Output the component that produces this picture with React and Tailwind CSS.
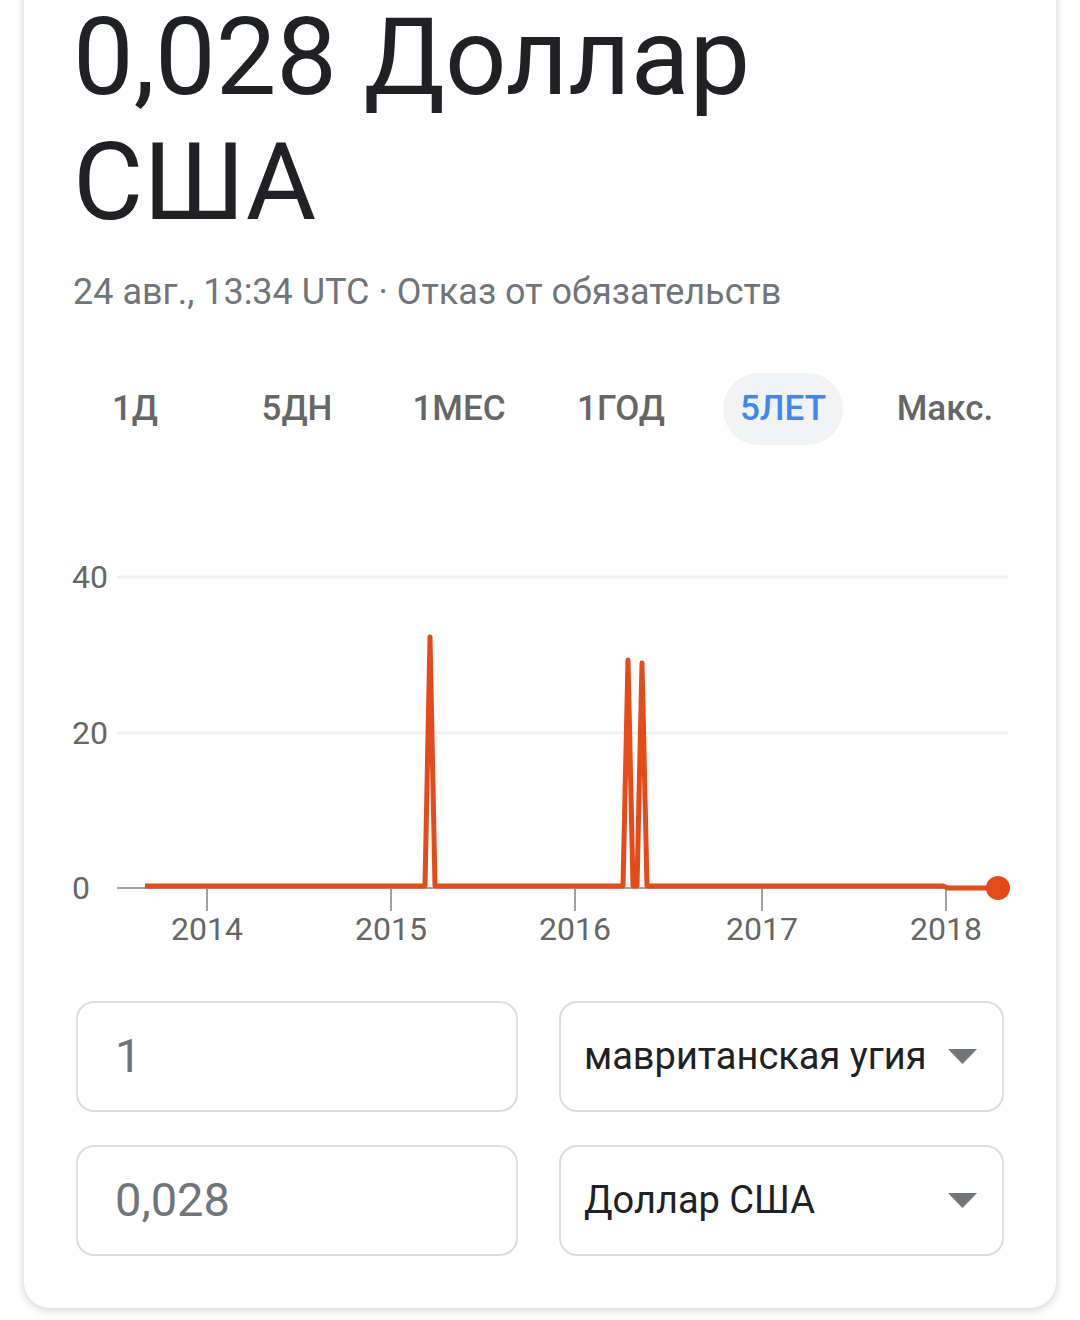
import React from "react";

const tabs = ["1Д", "5ДН", "1МЕС", "1ГОД", "5ЛЕТ", "Макс."];

function Chart() {
  const pts = [
    [145, 886], [425, 886], [430, 637], [435, 886], [623, 886], [628, 660], [633, 886],
    [637, 886], [642, 663], [647, 886], [943, 886], [948, 888], [998, 888],
  ];
  const ticks = [
    [207, "2014"], [391, "2015"], [575, "2016"], [762, "2017"], [946, "2018"],
  ];
  return (
    <svg
      className="block w-[1032px] h-[400px] -mx-[52px]"
      viewBox="24 550 1032 400"
      width="1032"
      height="400"
      style={{ fontFamily: "Roboto, sans-serif" }}
    >
      <line x1="117" y1="577" x2="1008" y2="577" stroke="#f1f1f1" strokeWidth="3" />
      <line x1="117" y1="733" x2="1008" y2="733" stroke="#f1f1f1" strokeWidth="3" />
      <line x1="117" y1="888" x2="1008" y2="888" stroke="#a0a0a0" strokeWidth="2" />
      {ticks.map(([x]) => (
        <line key={x} x1={x} y1="888" x2={x} y2="911" stroke="#a0a0a0" strokeWidth="2" />
      ))}
      <text x="108" y="588" textAnchor="end" fontSize="32" fill="#666666">40</text>
      <text x="108" y="744" textAnchor="end" fontSize="32" fill="#666666">20</text>
      <text x="90" y="899" textAnchor="end" fontSize="32" fill="#666666">0</text>
      {ticks.map(([x, t]) => (
        <text key={t} x={x} y="940" textAnchor="middle" fontSize="32" fill="#666666">{t}</text>
      ))}
      <polyline
        points={pts.map((p) => p.join(",")).join(" ")}
        fill="none"
        stroke="#e64a19"
        strokeWidth="5"
        strokeLinejoin="round"
      />
      <circle cx="998" cy="888" r="12" fill="#e64a19" />
    </svg>
  );
}

function Caret() {
  return (
    <svg width="29" height="15" viewBox="0 0 29 15" className="shrink-0">
      <path d="M0 0 H29 L14.5 15 Z" fill="#70757a" />
    </svg>
  );
}

export default function App() {
  return (
    <div className="w-[1080px] h-[1320px] overflow-hidden bg-white px-[24px] font-['Roboto',sans-serif]">
      <div className="-mt-[30px] pt-[25px] px-[52px] pb-[52px] bg-white rounded-[26px] shadow-[0_2px_8px_rgba(32,33,36,0.22)]">
        <h1 className="-ml-[3px] text-[108px] leading-[125px] text-[#202124] font-normal whitespace-nowrap">
          0,028 Доллар
          <br />
          США
        </h1>
        <div className="-ml-[3px] mt-[27px] text-[36px] leading-[40px] text-[#70757a] whitespace-nowrap">
          24 авг., 13:34 UTC · Отказ от обязательств
        </div>
        <div className="mt-[61px] -mx-[22px] grid grid-cols-6">
          {tabs.map((t) => (
            <div key={t} className="flex justify-center">
              <div
                className={
                  t === "5ЛЕТ"
                    ? "h-[72px] w-[120px] rounded-full bg-[#f1f3f4] flex items-center justify-center text-[35px] font-medium text-[#4285f4]"
                    : "h-[72px] w-[120px] rounded-full flex items-center justify-center text-[35px] font-medium text-[#666666]"
                }
              >
                {t}
              </div>
            </div>
          ))}
        </div>
        <div className="mt-[105px]">
          <Chart />
        </div>
        <div className="mt-[51px] grid grid-cols-[442px_445px] gap-x-[41px] gap-y-[33px]">
          <div className="h-[111px] border-2 border-[#dadce0] rounded-[18px] flex items-center pl-[37px] text-[47px] text-[#70757a]">
            1
          </div>
          <div className="h-[111px] border-2 border-[#dadce0] rounded-[18px] flex items-center justify-between pl-[23px] pr-[25px] text-[38px] text-[#202124] whitespace-nowrap">
            <span>мавританская угия</span>
            <Caret />
          </div>
          <div className="h-[111px] border-2 border-[#dadce0] rounded-[18px] flex items-center pl-[37px] text-[47px] text-[#70757a]">
            0,028
          </div>
          <div className="h-[111px] border-2 border-[#dadce0] rounded-[18px] flex items-center justify-between pl-[23px] pr-[25px] text-[38px] text-[#202124] whitespace-nowrap">
            <span>Доллар США</span>
            <Caret />
          </div>
        </div>
      </div>
    </div>
  );
}
